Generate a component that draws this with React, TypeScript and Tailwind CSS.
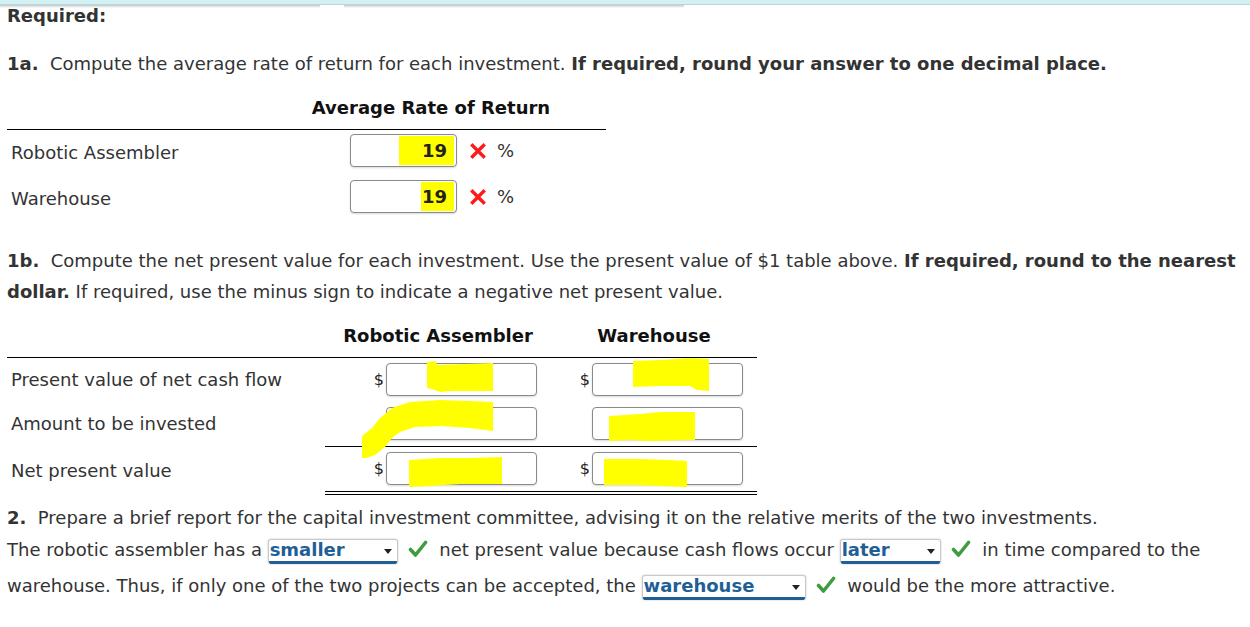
import React from "react";

function Check() {
  return (
    <svg width="20" height="18" viewBox="0 0 20 18" className="inline-block align-[-2px]">
      <path d="M2.5 9.5 L7.5 15 L17.5 2.5" fill="none" stroke="#3f9c3f" strokeWidth="3.6" strokeLinecap="round" strokeLinejoin="round" />
    </svg>
  );
}

function Cross() {
  return (
    <svg width="16" height="16" viewBox="0 0 16 16" className="inline-block">
      <path d="M2.5 2.5 L13.5 13.5 M13.5 2.5 L2.5 13.5" fill="none" stroke="#ff1a1a" strokeWidth="3.4" strokeLinecap="square" />
    </svg>
  );
}

function Dropdown({ value, width }: { value: string; width: string }) {
  return (
    <span
      className={`relative inline-flex items-end ${width} h-[25px] align-baseline bg-white rounded-[3px] border border-[#c8c8c8] shadow-[0_0_2px_rgba(0,0,0,0.25)]`}
    >
      <span className="absolute left-0 right-0 bottom-[-1px] h-[3px] bg-[#1f5f96] rounded-b-[2px]" />
      <span className="pl-[1px] pb-[3px] leading-[20px] font-bold text-[#1f5f96]">{value}</span>
      <span className="absolute right-[5px] top-[9px] w-0 h-0 border-l-[4px] border-r-[4px] border-t-[5px] border-l-transparent border-r-transparent border-t-[#222]" />
    </span>
  );
}

function Box({ children }: { children?: React.ReactNode }) {
  return (
    <div className="w-[151px] h-[33px] rounded-[4px] border border-[#8a8a8a] bg-white shadow-[0_1px_2px_rgba(0,0,0,0.15)]">
      {children}
    </div>
  );
}

export default function App() {
  return (
    <div className="relative w-[1250px] h-[627px] bg-white text-[#333] text-[18px] overflow-hidden font-['DejaVu_Sans',Verdana,sans-serif]">
      {/* top bar */}
      <div className="h-[5px] bg-[#d2f1f4] border-b border-[#b6d6da]" />
      <div className="flex h-[3px]">
        <div className="w-[320px] bg-gradient-to-b from-[#c8c8c8] to-transparent" />
        <div className="ml-[24px] w-[340px] bg-gradient-to-b from-[#c8c8c8] to-transparent" />
      </div>

      <div className="pl-[7px]">
        <div className="mt-[-2px] leading-[20px] font-bold">Required:</div>

        <p className="mt-[26px] leading-[24px]">
          <b>1a.</b>&nbsp; Compute the average rate of return for each investment.{" "}
          <b>If required, round your answer to one decimal place.</b>
        </p>

        {/* table 1 */}
        <div className="mt-[20px] w-[599px]">
          <div className="grid grid-cols-[336px_176px_87px] h-[34px] border-b border-black">
            <div />
            <div className="flex justify-center whitespace-nowrap font-bold leading-[24px] text-[#111]">
              Average Rate of Return
            </div>
            <div />
          </div>
          {[
            { label: "Robotic Assembler", hl: "w-[55px]" },
            { label: "Warehouse", hl: "w-[33px]" },
          ].map((r) => (
            <div key={r.label} className="grid grid-cols-[336px_263px] h-[46px] pt-[4px]">
              <div className="pl-[4px] h-[33px] flex items-center pt-[3px]">{r.label}</div>
              <div className="flex items-center h-[33px] pl-[7px]">
                <div className="relative w-[107px] h-[33px] rounded-[4px] border border-[#8a8a8a] bg-white shadow-[0_1px_2px_rgba(0,0,0,0.15)]">
                  <div className={`absolute right-[2px] top-[1px] bottom-[1px] ${r.hl} bg-[#ffff00]`} />
                  <div className="absolute right-[9px] top-0 bottom-0 flex items-center font-bold text-[#222]">19</div>
                </div>
                <span className="ml-[13px] flex items-center"><Cross /></span>
                <span className="ml-[11px]">%</span>
              </div>
            </div>
          ))}
        </div>

        <p className="mt-[23px] w-[1240px] leading-[31px]">
          <b>1b.</b>&nbsp; Compute the net present value for each investment. Use the present value of $1 table above.{" "}
          <b>If required, round to the nearest dollar.</b> If required, use the minus sign to indicate a negative net present value.
        </p>

        {/* table 2 */}
        <div className="relative mt-[17px] w-[750px]">
          <div className="grid grid-cols-[318px_226px_206px] h-[34px] border-b border-black font-bold text-[#111] leading-[24px]">
            <div />
            <div className="text-center">Robotic Assembler</div>
            <div className="text-center">Warehouse</div>
          </div>

          {/* row 1 */}
          <div className="grid grid-cols-[318px_226px_206px] h-[44px]">
            <div className="pl-[4px] pt-[5px] h-[38px] flex items-center">Present value of net cash flow</div>
            <div className="pt-[5px] flex justify-end items-start pr-[14px]">
              <span className="mr-[2px] h-[33px] flex items-center text-[16px] text-[#222]">$</span>
              <Box />
            </div>
            <div className="pt-[5px] flex justify-end items-start pr-[14px]">
              <span className="mr-[2px] h-[33px] flex items-center text-[16px] text-[#222]">$</span>
              <Box />
            </div>
          </div>

          {/* row 2 */}
          <div className="grid grid-cols-[318px_226px_206px]">
            <div className="pl-[4px] pt-[5px] h-[38px] flex items-center">Amount to be invested</div>
            <div className="h-[45px] pt-[5px] flex justify-end items-start pr-[14px] border-b border-black">
              <Box />
            </div>
            <div className="h-[45px] pt-[5px] flex justify-end items-start pr-[14px] border-b border-black">
              <Box />
            </div>
          </div>

          {/* row 3 */}
          <div className="grid grid-cols-[318px_226px_206px]">
            <div className="pl-[4px] pt-[7px] h-[40px] flex items-center">Net present value</div>
            <div className="h-[48px] pt-[5px] flex justify-end items-start pr-[14px] border-b-[4px] border-double border-black">
              <span className="mr-[2px] h-[33px] flex items-center text-[16px] text-[#222]">$</span>
              <Box />
            </div>
            <div className="h-[48px] pt-[5px] flex justify-end items-start pr-[14px] border-b-[4px] border-double border-black">
              <span className="mr-[2px] h-[33px] flex items-center text-[16px] text-[#222]">$</span>
              <Box />
            </div>
          </div>

          {/* yellow highlighter marks over the inputs */}
          <svg
            className="absolute left-[-7px] top-[-324px] pointer-events-none"
            width="800"
            height="500"
            viewBox="0 0 800 500"
          >
            <g fill="#ffff00">
              <path d="M427 362 L436 361 L437 365 L493 363 L493 391 L452 391 L440 392 L432 389 L427 388 Z" />
              <path d="M633 361 L660 360 L690 358 L709 359 L709 391 L697 390 L690 386 L660 386 L633 387 Z" />
              <path d="M362 458 L362 436 L372 428 L380 418 L392 408 L410 402 L440 400 L470 401 L493 402 L493 431 L470 428 L440 426 L415 427 L400 432 L392 438 L385 447 L375 455 L366 458 Z" />
              <path d="M609 416 L640 414 L660 412 L695 412 L695 440 L650 441 L630 440 L609 441 Z" />
              <path d="M409 460 L440 458 L470 458 L502 457 L502 484 L460 484 L430 486 L409 487 Z" />
              <path d="M604 459 L640 459 L670 460 L687 461 L687 487 L660 486 L630 485 L604 485 Z" />
            </g>
          </svg>
        </div>

        {/* section 2 */}
        <p className="mt-[9px] leading-[28px]">
          <b>2.</b>&nbsp; Prepare a brief report for the capital investment committee, advising it on the relative merits of the two investments.
        </p>
        <p className="w-[1236px] leading-[36px]">
          The robotic assembler has a <Dropdown value="smaller" width="w-[130px]" />
          <span className="ml-[10px] mr-[6px]"><Check /></span> net present value because cash flows occur{" "}
          <Dropdown value="later" width="w-[101px]" />
          <span className="ml-[10px] mr-[6px]"><Check /></span> in time compared to the warehouse. Thus, if only one of the two projects can be accepted, the{" "}
          <Dropdown value="warehouse" width="w-[164px]" />
          <span className="ml-[10px] mr-[6px]"><Check /></span> would be the more attractive.
        </p>
      </div>
    </div>
  );
}
